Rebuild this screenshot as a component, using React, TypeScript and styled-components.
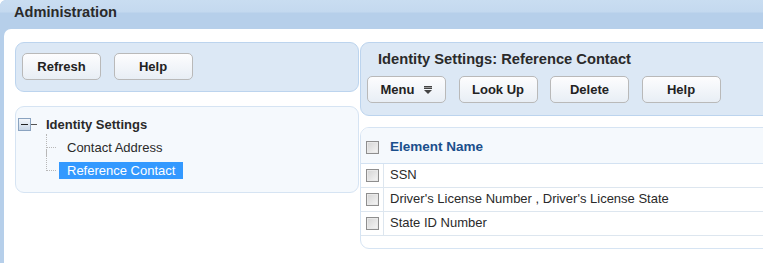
import * as React from "react";
import styled, { createGlobalStyle } from "styled-components";

const rows = [
  "SSN",
  "Driver's License Number , Driver's License State",
  "State ID Number",
];

const App: React.FC = () => {
  return (
    <Page>
      <GlobalStyle />
      <Header>Administration</Header>
      <Frame>
        <Column>
          <Toolbar>
            <Buttons>
              <Button>Refresh</Button>
              <Button>Help</Button>
            </Buttons>
          </Toolbar>
          <TreePanel>
            <TreeRoot>
              <Expander>
                <span />
              </Expander>
              <Stub />
              Identity Settings
            </TreeRoot>
            <TreeChildren>
              <TreeItem>
                <Branch />
                <ItemLabel>Contact Address</ItemLabel>
              </TreeItem>
              <TreeItem $last>
                <Branch />
                <ItemLabel $selected>Reference Contact</ItemLabel>
              </TreeItem>
            </TreeChildren>
          </TreePanel>
        </Column>

        <Column $gap={11}>
          <Toolbar $tall>
            <Title>Identity Settings: Reference Contact</Title>
            <Buttons>
              <Button>
                Menu
                <svg width="8" height="8" viewBox="0 0 8 8">
                  <rect x="0" y="0" width="8" height="1" fill="#444" />
                  <rect x="0" y="1" width="8" height="1" fill="#999" />
                  <rect x="0" y="2" width="8" height="1" fill="#444" />
                  <path d="M0 4 H8 L4 8 Z" fill="#444" />
                </svg>
              </Button>
              <Button>Look Up</Button>
              <Button>Delete</Button>
              <Button>Help</Button>
            </Buttons>
          </Toolbar>
          <GridPanel>
            <HeadRow>
              <CheckCell>
                <Checkbox />
              </CheckCell>
              <HeadCell>Element Name</HeadCell>
            </HeadRow>
            {rows.map((r) => (
              <Row key={r}>
                <CheckCell $divider>
                  <Checkbox />
                </CheckCell>
                <Cell>{r}</Cell>
              </Row>
            ))}
          </GridPanel>
        </Column>
      </Frame>
    </Page>
  );
};

export default App;

/* Styles */
const GlobalStyle = createGlobalStyle`
  html, body {
    margin: 0;
    padding: 0;
    overflow: hidden;
  }
  body {
    font-family: "Liberation Sans", Arial, sans-serif;
    font-size: 13px;
    color: #222;
  }
`;

const Page = styled.div`
  width: 763px;
  height: 263px;
  overflow: hidden;
  background: #b6cfea;
  border-top-left-radius: 6px;
`;

const Header = styled.div`
  height: 29px;
  box-sizing: border-box;
  padding: 4px 0 0 14px;
  font-weight: bold;
  font-size: 14.6px;
  color: #2a2a2a;
  background: linear-gradient(#c9ddf1 0, #c4d9ef 12px, #b6cfea 13px, #b6cfea 100%);
  border-top-left-radius: 6px;
`;

const Frame = styled.div`
  margin-left: 4px;
  height: 234px;
  box-sizing: border-box;
  background: #fff;
  border-top-left-radius: 7px;
  padding: 13px 0 0 11px;
  display: grid;
  grid-template-columns: 344px 440px;
  column-gap: 1px;
  align-items: start;
`;

const Column = styled.div<{ $gap?: number }>`
  display: flex;
  flex-direction: column;
  gap: ${(p) => p.$gap ?? 14}px;
`;

const Toolbar = styled.div<{ $tall?: boolean }>`
  box-sizing: border-box;
  height: ${(p) => (p.$tall ? 74 : 50)}px;
  background: #dce8f5;
  border: 1px solid #bcd4ee;
  border-radius: 9px;
  padding: ${(p) => (p.$tall ? "8px 6px 0 6px" : "10px 6px 0")};
  display: flex;
  flex-direction: column;
`;

const Title = styled.div`
  font-weight: bold;
  font-size: 14.7px;
  color: #2a2a2a;
  padding-left: 11px;
  height: 25px;
`;

const Buttons = styled.div`
  display: flex;
  gap: 12.5px;
`;

const Button = styled.button`
  box-sizing: border-box;
  width: 79px;
  height: 27px;
  border: 1px solid #b9b9b9;
  border-radius: 5px;
  background: linear-gradient(#fdfdfe, #e8eef5);
  font-family: "Liberation Sans", Arial, sans-serif;
  font-weight: bold;
  font-size: 13px;
  color: #222;
  display: flex;
  align-items: center;
  justify-content: center;
  gap: 10px;
  padding: 0;
  svg {
    margin-top: 1px;
  }
`;

const TreePanel = styled.div`
  box-sizing: border-box;
  height: 87px;
  background: #f5f9fd;
  border: 1px solid #d6e4f3;
  border-radius: 9px;
  padding: 9px 0 0 2px;
`;

const TreeRoot = styled.div`
  display: flex;
  align-items: center;
  height: 17px;
  font-weight: bold;
  color: #2a2a2a;
`;

const Expander = styled.span`
  box-sizing: border-box;
  width: 13px;
  height: 13px;
  border: 1px solid #8aa3c0;
  background: linear-gradient(#f3f6fa, #c9d6e6);
  display: flex;
  align-items: center;
  justify-content: center;
  span {
    width: 7px;
    height: 1px;
    background: #222;
  }
`;

const Stub = styled.span`
  width: 6px;
  height: 1px;
  background: #555;
  margin: 0 9px 0 0;
`;

const TreeChildren = styled.div`
  padding: 6px 0 0 28px;
  display: flex;
  flex-direction: column;
  gap: 6px;
`;

const TreeItem = styled.div<{ $last?: boolean }>`
  position: relative;
  display: flex;
  align-items: center;
  height: 17px;
  &::before {
    content: "";
    position: absolute;
    left: 0;
    top: ${(p) => (p.$last ? "-12px" : "-5px")};
    height: ${(p) => (p.$last ? "21px" : "22px")};
    border-left: 1px dotted #b8b8b8;
  }
`;

const Branch = styled.span`
  width: 10px;
  border-top: 1px dotted #b8b8b8;
  margin-right: 3px;
`;

const ItemLabel = styled.span<{ $selected?: boolean }>`
  padding: 0 8px;
  line-height: 17px;
  color: ${(p) => (p.$selected ? "#fff" : "#2a2a2a")};
  background: ${(p) => (p.$selected ? "#3399ff" : "transparent")};
`;

const GridPanel = styled.div`
  box-sizing: border-box;
  height: 122px;
  border: 1px solid #d6e4f3;
  border-radius: 9px;
  overflow: hidden;
  background: #fff;
`;

const HeadRow = styled.div`
  display: flex;
  box-sizing: border-box;
  height: 36px;
  padding-top: 4px;
  background: #f5f9fd;
  border-bottom: 1px solid #d3e2f2;
`;

const Row = styled.div`
  display: flex;
  height: 23px;
  border-bottom: 1px solid #dde6ef;
`;

const CheckCell = styled.div<{ $divider?: boolean }>`
  width: 23px;
  box-sizing: border-box;
  display: flex;
  align-items: center;
  justify-content: center;
  border-right: 1px solid ${(p) => (p.$divider ? "#dde6ef" : "transparent")};
`;

const HeadCell = styled.div`
  display: flex;
  align-items: center;
  padding: 0 0 2px 6px;
  font-weight: bold;
  font-size: 13.5px;
  color: #1b4f8c;
`;

const Cell = styled.div`
  display: flex;
  align-items: center;
  padding: 0 0 3px 6px;
  color: #2a2a2a;
`;

const Checkbox = styled.span`
  box-sizing: border-box;
  width: 13px;
  height: 13px;
  border: 1px solid #8e8e8e;
  background: linear-gradient(135deg, #d4d4d4, #f6f6f6);
  box-shadow: inset 0 0 0 1px #e9e9e9;
`;
